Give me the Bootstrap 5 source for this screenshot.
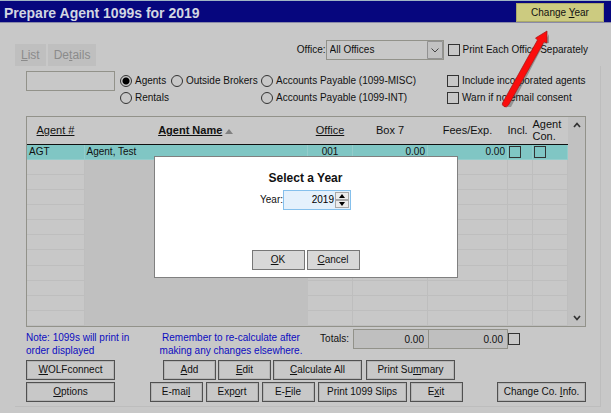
<!DOCTYPE html>
<html lang="en">
<head>
<meta charset="utf-8">
<meta name="viewport" content="width=device-width, initial-scale=1">
<title>Prepare Agent 1099s</title>
<link href="https://cdn.jsdelivr.net/npm/bootstrap@5.3.0/dist/css/bootstrap.min.css" rel="stylesheet">
<style>
body{font:10px/12px "Liberation Sans",Arial,sans-serif;color:#111;background:#c8c8c8}
.title-bar{height:23px;background:#06067e;border-top:1px solid #9fb4c4;border-bottom:1px solid #8a8aa8;padding:2px 7px 0 4px;color:#d2d6e2}
.title-bar h1{font-size:14px;line-height:18px;font-weight:700}
.app-btn{display:block;border:1px solid #505050;outline:1px solid #b4b4b4;outline-offset:-2px;border-radius:0;background:#c8c8c8;color:#111;font-size:10px;line-height:12px;padding:0;height:20px;width:53px;white-space:nowrap}
.app-btn.wide{width:89px}
.app-btn.apart{margin-left:2px}
.app-btn.year{background:#cccb80;border-color:#aaa96a;outline:0;height:19px;width:88px}
.tight{gap:2px}
.loose{gap:3px}
.tab-page{padding:17px 10px 10px 15px}
.tab-btn{border:0;border-radius:0;background:#bfbfbf;color:#8b8b8b;font-size:12px;line-height:14px;height:22px;padding:0 6px}
.sheet{padding:5px 14px 4px 11px;border-right:1px solid #bdbdbd;border-bottom:1px solid #bdbdbd}
.office-row{gap:4px;padding-right:13px}
.flat-field{border:1px solid #92928a;border-radius:0;background:#c8c8c8;height:20px;font-size:10px;line-height:12px;padding:0 4px;appearance:none;color:#111}
select.flat-field{width:118px;padding:0 20px 0 3px}
.drop-mark{right:1px;top:1px;pointer-events:none}
input[type=checkbox].tick,input[type=radio].dot{appearance:none;flex:none;width:12px;height:12px;margin:0;border:1px solid #333;background:#c8c8c8}
input[type=radio].dot{border-radius:50%}
input[type=radio].dot:checked{background:radial-gradient(circle,#000 0 3px,#c8c8c8 4px)}
.pick{display:flex;align-items:center;gap:3px;white-space:nowrap}
.search-row{gap:5px}
.search-field{width:89px}
.filters{display:grid;grid-template-columns:51px 90px 1fr 139px;row-gap:5px;padding-top:4px}
.grid-box{margin-top:12px;border:1px solid #92928a;height:211px}
.agents{table-layout:fixed;width:100%;height:100%;border-collapse:collapse;font-size:11px;line-height:12px}
.agents th{height:27px;padding:0;text-align:center;font-weight:400;border-bottom:1px solid #111}
.agents td{padding:0 2px;height:15px;border-right:1px solid #bebebe;border-bottom:1px solid #bebebe}
.agents td.name-cell{background:#c0c0c0;border-color:#c0c0c0}
.agents tr.chosen td{background:#80c6c4;border-color:#94cccb;font-size:10px}
.agents tr.chosen .tick{display:block;background:#80c6c4;margin-left:-1px}
.col-id{width:57px}.col-office{width:45px}.col-box{width:75px}.col-fees{width:80px}.col-incl{width:25px}.col-con{width:35px}
.scroll-rail{width:17px;flex:none;background:#c1c1c1;padding:5px 0}
.note{color:#0c0cc0;line-height:13px}
.notes{padding-top:4px}
.totals{padding:2px 66px 0 0}
.totals label{padding:4px 4px 0 0}
.totals .flat-field{width:76px;text-align:right;background:#bfbfbf}
.totals .flat-field+.flat-field{width:80px;margin-left:-1px}
.foot-grid{display:grid;grid-template-columns:125px 1fr 275px;height:33px}
.btn-rows{display:grid;row-gap:2px}
.veil{padding-top:16px}
.year-dialog{width:304px;background:#fff;border:1px solid #808080;padding:13px 0 7px}
.year-dialog h2{font-size:12px;line-height:16px;font-weight:700}
.year-dialog .app-btn{background:#d8d8d8;border-color:#777;outline:0}
.spin{width:68px;height:20px;background:#e4f1fc;border:1px solid #85c0ec;padding-right:1px}
.spin input{width:50px;border:0;background:transparent;text-align:right;padding:0;font-size:10px;appearance:textfield}
.spin input::-webkit-inner-spin-button{display:none}
.spin button{display:flex;align-items:center;justify-content:center;width:14px;height:8px;border:1px solid #a8a8a8;background:#ececec;padding:0}
.dialog-actions{margin-top:40px}
.pointer-art{right:50px;top:24px;z-index:5;pointer-events:none}
</style>
<script src="https://cdn.jsdelivr.net/npm/bootstrap@5.3.0/dist/js/bootstrap.bundle.min.js"></script>
</head>
<body>
<div class="position-relative">
<header class="title-bar d-flex justify-content-between align-items-center">
  <h1 class="m-0">Prepare Agent 1099s for 2019</h1>
  <button type="button" class="app-btn year">Change <u>Y</u>ear</button>
</header>
<main class="tab-page">
  <div class="d-flex justify-content-between align-items-start">
    <div class="tight d-flex mt-1">
      <button type="button" class="tab-btn"><u>L</u>ist</button>
      <button type="button" class="tab-btn">De<u>t</u>ails</button>
    </div>
    <div class="office-row d-flex align-items-center">
      <div class="d-flex align-items-center">
        <label for="office">Office:</label>
        <div class="position-relative">
          <select id="office" class="flat-field"><option>All Offices</option></select>
          <svg class="drop-mark position-absolute" width="16" height="18" viewBox="0 0 16 18"><path d="M.5.5h15v17H.5z" fill="#c2c2c2" stroke="#929292"/><path d="M4.5 7.5 8 11l3.5-3.5" fill="none" stroke="#444"/></svg>
        </div>
      </div>
      <label class="pick"><input type="checkbox" class="tick">Print Each Office Separately</label>
    </div>
  </div>
  <div class="sheet">
    <div class="search-row d-flex">
      <input type="text" class="flat-field search-field" aria-label="Find agent">
      <div class="filters flex-grow-1">
        <label class="pick"><input type="radio" class="dot" name="kind" checked>Agents</label>
        <label class="pick"><input type="radio" class="dot" name="kind">Outside Brokers</label>
        <label class="pick"><input type="radio" class="dot" name="kind">Accounts Payable (1099-MISC)</label>
        <label class="pick"><input type="checkbox" class="tick">Include incorporated agents</label>
        <label class="pick"><input type="radio" class="dot" name="kind">Rentals</label>
        <span></span>
        <label class="pick"><input type="radio" class="dot" name="kind">Accounts Payable (1099-INT)</label>
        <label class="pick"><input type="checkbox" class="tick">Warn if no email consent</label>
      </div>
    </div>
    <div class="grid-box d-flex">
      <table class="agents">
        <colgroup><col class="col-id"><col><col class="col-office"><col class="col-box"><col class="col-fees"><col class="col-incl"><col class="col-con"></colgroup>
        <thead><tr><th><u>Agent #</u></th><th class="fw-bold"><u>Agent Name</u> <svg width="8" height="5" viewBox="0 0 8 5"><path d="M0 5 4 0l4 5z" fill="#808080"/></svg></th><th><u>Office</u></th><th>Box 7</th><th>Fees/Exp.</th><th class="text-start">Incl.</th><th class="text-start">Agent Con.</th></tr></thead>
        <tbody>
          <tr class="chosen"><td>AGT</td><td class="name-cell">Agent, Test</td><td class="text-center">001</td><td class="text-end">0.00</td><td class="text-end">0.00</td><td><input type="checkbox" class="tick" aria-label="Included"></td><td><input type="checkbox" class="tick" aria-label="Agent consent"></td></tr>
          <tr><td></td><td class="name-cell"></td><td></td><td></td><td></td><td></td><td></td></tr>
          <tr><td></td><td class="name-cell"></td><td></td><td></td><td></td><td></td><td></td></tr>
          <tr><td></td><td class="name-cell"></td><td></td><td></td><td></td><td></td><td></td></tr>
          <tr><td></td><td class="name-cell"></td><td></td><td></td><td></td><td></td><td></td></tr>
          <tr><td></td><td class="name-cell"></td><td></td><td></td><td></td><td></td><td></td></tr>
          <tr><td></td><td class="name-cell"></td><td></td><td></td><td></td><td></td><td></td></tr>
          <tr><td></td><td class="name-cell"></td><td></td><td></td><td></td><td></td><td></td></tr>
          <tr><td></td><td class="name-cell"></td><td></td><td></td><td></td><td></td><td></td></tr>
          <tr><td></td><td class="name-cell"></td><td></td><td></td><td></td><td></td><td></td></tr>
          <tr><td></td><td class="name-cell"></td><td></td><td></td><td></td><td></td><td></td></tr>
          <tr><td></td><td class="name-cell"></td><td></td><td></td><td></td><td></td><td></td></tr>
        </tbody>
      </table>
      <div class="scroll-rail d-flex flex-column justify-content-between align-items-center">
        <svg width="8" height="6" viewBox="0 0 8 6"><path d="m1 5 3-3.5L7 5" fill="none" stroke="#333" stroke-width="1.7"/></svg>
        <svg width="8" height="6" viewBox="0 0 8 6"><path d="m1 1 3 3.5L7 1" fill="none" stroke="#333" stroke-width="1.7"/></svg>
      </div>
    </div>
    <div class="foot-grid">
      <div class="note notes">Note: 1099s will print in<br>order displayed</div>
      <div class="note notes text-center">Remember to re-calculate after<br>making any changes elsewhere.</div>
      <div class="totals d-flex align-items-start justify-content-end">
        <label for="tot7">Totals:</label>
        <input id="tot7" class="flat-field" value="0.00" readonly>
        <input class="flat-field" value="0.00" aria-label="Total fees and expenses" readonly>
        <input type="checkbox" class="tick mt-1" aria-label="Include all">
      </div>
    </div>
    <div class="btn-rows">
      <div class="d-flex">
        <button type="button" class="app-btn wide"><u>W</u>OLFconnect</button>
        <div class="tight d-flex ms-5">
          <button type="button" class="app-btn"><u>A</u>dd</button>
          <button type="button" class="app-btn"><u>E</u>dit</button>
          <button type="button" class="app-btn wide"><u>C</u>alculate All</button>
          <button type="button" class="app-btn wide apart">Print Su<u>m</u>mary</button>
        </div>
      </div>
      <div class="d-flex justify-content-between">
        <button type="button" class="app-btn wide"><u>O</u>ptions</button>
        <div class="loose d-flex">
          <button type="button" class="app-btn">E-mai<u>l</u></button>
          <button type="button" class="app-btn">Exp<u>o</u>rt</button>
          <button type="button" class="app-btn">E-<u>F</u>ile</button>
          <button type="button" class="app-btn wide">Print 1099 Slips</button>
          <button type="button" class="app-btn">E<u>x</u>it</button>
        </div>
        <button type="button" class="app-btn wide">Change Co. <u>I</u>nfo.</button>
      </div>
    </div>
  </div>
</main>
<svg class="pointer-art position-absolute" width="70" height="90" viewBox="0 0 70 90">
  <path d="M16 83 52 20l6-1v-9L20 83z" fill="#333" opacity=".35"/>
  <path d="M11.500 79 46.500 16 44.500 14 56 7v12l-3-1L17.500 81q-2 3-4.500 1.500T11.500 79z" fill="#fb0d0d" stroke="#a01515" stroke-width=".7"/>
</svg>
<div class="veil position-absolute top-0 start-0 w-100 h-100 d-flex align-items-center justify-content-center">
  <section class="year-dialog" role="dialog" aria-labelledby="dlg">
    <h2 id="dlg" class="text-center mb-0">Select a Year</h2>
    <div class="d-flex align-items-center justify-content-center mt-1">
      <label for="yr">Year:</label>
      <div class="spin d-flex align-items-center">
        <input id="yr" type="number" value="2019">
        <div class="d-flex flex-column ms-auto">
          <button type="button" aria-label="Next year"><svg width="6" height="4" viewBox="0 0 6 4"><path d="M0 4 3 0l3 4z"/></svg></button>
          <button type="button" aria-label="Previous year"><svg width="6" height="4" viewBox="0 0 6 4"><path d="m0 0 3 4 3-4z"/></svg></button>
        </div>
      </div>
    </div>
    <div class="dialog-actions tight d-flex justify-content-center">
      <button type="button" class="app-btn"><u>O</u>K</button>
      <button type="button" class="app-btn"><u>C</u>ancel</button>
    </div>
  </section>
</div>
</div>
</body>
</html>
